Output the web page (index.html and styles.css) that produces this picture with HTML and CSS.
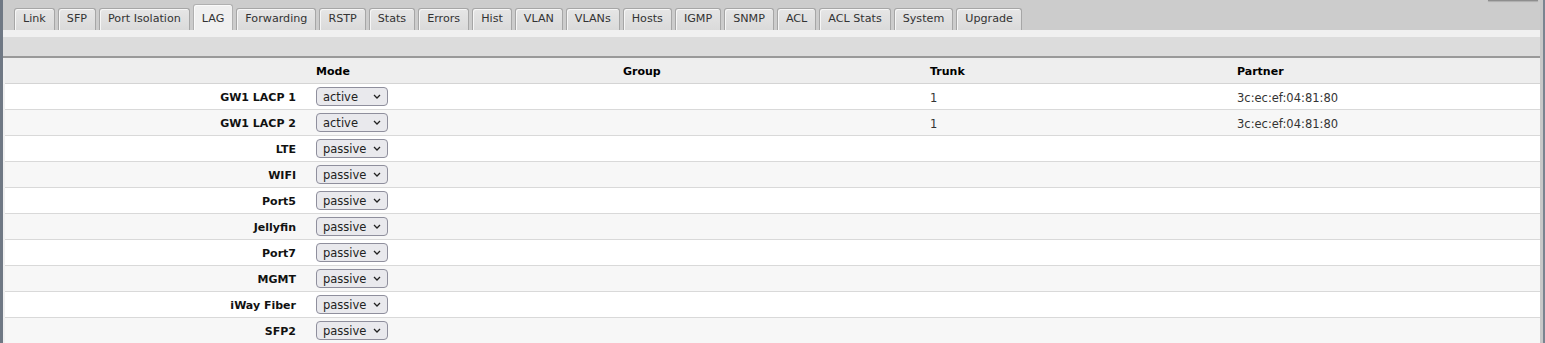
FILE: index.html
```html
<!DOCTYPE html>
<html>
<head>
<meta charset="utf-8">
<title>LAG</title>
<link rel="stylesheet" href="styles.css">
</head>
<body>
<div class="page">
  <div class="leftbar"></div>
  <div class="main">
    <div class="topbtn"></div>
    <ul class="tabs">
      <li class="tab">Link</li>
      <li class="tab">SFP</li>
      <li class="tab">Port Isolation</li>
      <li class="tab active">LAG</li>
      <li class="tab">Forwarding</li>
      <li class="tab">RSTP</li>
      <li class="tab">Stats</li>
      <li class="tab">Errors</li>
      <li class="tab">Hist</li>
      <li class="tab">VLAN</li>
      <li class="tab">VLANs</li>
      <li class="tab">Hosts</li>
      <li class="tab">IGMP</li>
      <li class="tab">SNMP</li>
      <li class="tab">ACL</li>
      <li class="tab">ACL Stats</li>
      <li class="tab">System</li>
      <li class="tab">Upgrade</li>
    </ul>
    <div class="panel">
      <div class="toolbar"></div>
      <div class="tablewrap">
        <table class="grid">
          <thead>
            <tr><th></th><th>Mode</th><th>Group</th><th>Trunk</th><th>Partner</th></tr>
          </thead>
          <tbody>
            <tr><td class="name">GW1 LACP 1</td><td class="ctl"><span class="sel"><select><option>active</option><option>passive</option></select><svg class="chev" width="8" height="5" viewBox="0 0 8 5"><path d="M1 1 L4 4 L7 1" fill="none" stroke="#222" stroke-width="1.3"/></svg></span></td><td></td><td>1</td><td>3c:ec:ef:04:81:80</td></tr>
            <tr><td class="name">GW1 LACP 2</td><td class="ctl"><span class="sel"><select><option>active</option><option>passive</option></select><svg class="chev" width="8" height="5" viewBox="0 0 8 5"><path d="M1 1 L4 4 L7 1" fill="none" stroke="#222" stroke-width="1.3"/></svg></span></td><td></td><td>1</td><td>3c:ec:ef:04:81:80</td></tr>
            <tr><td class="name">LTE</td><td class="ctl"><span class="sel"><select><option>passive</option><option>active</option></select><svg class="chev" width="8" height="5" viewBox="0 0 8 5"><path d="M1 1 L4 4 L7 1" fill="none" stroke="#222" stroke-width="1.3"/></svg></span></td><td></td><td></td><td></td></tr>
            <tr><td class="name">WIFI</td><td class="ctl"><span class="sel"><select><option>passive</option><option>active</option></select><svg class="chev" width="8" height="5" viewBox="0 0 8 5"><path d="M1 1 L4 4 L7 1" fill="none" stroke="#222" stroke-width="1.3"/></svg></span></td><td></td><td></td><td></td></tr>
            <tr><td class="name">Port5</td><td class="ctl"><span class="sel"><select><option>passive</option><option>active</option></select><svg class="chev" width="8" height="5" viewBox="0 0 8 5"><path d="M1 1 L4 4 L7 1" fill="none" stroke="#222" stroke-width="1.3"/></svg></span></td><td></td><td></td><td></td></tr>
            <tr><td class="name">Jellyfin</td><td class="ctl"><span class="sel"><select><option>passive</option><option>active</option></select><svg class="chev" width="8" height="5" viewBox="0 0 8 5"><path d="M1 1 L4 4 L7 1" fill="none" stroke="#222" stroke-width="1.3"/></svg></span></td><td></td><td></td><td></td></tr>
            <tr><td class="name">Port7</td><td class="ctl"><span class="sel"><select><option>passive</option><option>active</option></select><svg class="chev" width="8" height="5" viewBox="0 0 8 5"><path d="M1 1 L4 4 L7 1" fill="none" stroke="#222" stroke-width="1.3"/></svg></span></td><td></td><td></td><td></td></tr>
            <tr><td class="name">MGMT</td><td class="ctl"><span class="sel"><select><option>passive</option><option>active</option></select><svg class="chev" width="8" height="5" viewBox="0 0 8 5"><path d="M1 1 L4 4 L7 1" fill="none" stroke="#222" stroke-width="1.3"/></svg></span></td><td></td><td></td><td></td></tr>
            <tr><td class="name">iWay Fiber</td><td class="ctl"><span class="sel"><select><option>passive</option><option>active</option></select><svg class="chev" width="8" height="5" viewBox="0 0 8 5"><path d="M1 1 L4 4 L7 1" fill="none" stroke="#222" stroke-width="1.3"/></svg></span></td><td></td><td></td><td></td></tr>
            <tr><td class="name">SFP2</td><td class="ctl"><span class="sel"><select><option>passive</option><option>active</option></select><svg class="chev" width="8" height="5" viewBox="0 0 8 5"><path d="M1 1 L4 4 L7 1" fill="none" stroke="#222" stroke-width="1.3"/></svg></span></td><td></td><td></td><td></td></tr>
          </tbody>
        </table>
      </div>
    </div>
  </div>
  <div class="rightbar"></div>
</div>
</body>
</html>
```
FILE: styles.css
```css
html, body {
  margin: 0;
  padding: 0;
  height: 100%;
  overflow: hidden;
}
body {
  background: #cccccc;
  font-family: "DejaVu Sans", Verdana, sans-serif;
  font-size: 11px;
  color: #333;
}
.page {
  display: flex;
  min-height: 100%;
}
.leftbar {
  width: 3px;
  flex: none;
  background: #6f7884;
}
.rightbar {
  width: 5px;
  flex: none;
  background: linear-gradient(to right, #c8c8c8 0, #c8c8c8 3px, #7a8490 3px);
}
.main {
  flex: 1;
  min-width: 0;
  background: #cccccc;
  position: relative;
}
.topbtn {
  position: absolute;
  top: -2px;
  right: 2px;
  width: 50px;
  height: 2px;
  border-bottom: 1px solid #8e8e8e;
  box-shadow: 0 1px 1px rgba(0,0,0,0.15);
  background: #d6d6d6;
}
.tabs {
  list-style: none;
  margin: 0;
  padding: 7px 0 0 11px;
  display: flex;
  align-items: flex-end;
  gap: 3px;
  height: 23px;
}
.tab {
  height: 21px;
  line-height: 20px;
  padding: 0 8px;
  font-size: 11.15px;
  border: 1px solid #a6a6a6;
  border-bottom: none;
  border-radius: 3px 3px 0 0;
  background: linear-gradient(#e6e6e6, #dadada);
  box-shadow: inset 1px 1px 0 #f6f6f6;
  color: #333;
  white-space: nowrap;
}
.tab.active {
  height: 25px;
  line-height: 27px;
  background: #f0f0f0;
  border-color: #b0b0b0;
  box-shadow: inset 1px 1px 0 #fafafa;
}
.panel {
  background: #f0f0f0;
  padding-top: 7px;
}
.toolbar {
  height: 19px;
  background: #dcdcdc;
  border-bottom: 2px solid #999;
}
.tablewrap {
  padding-left: 2px;
  background: #f0f0f0;
  height: 400px;
}
.grid {
  width: 100%;
  border-collapse: collapse;
  table-layout: fixed;
}
.grid th {
  height: 23px;
  background: #eeeeee;
  border-bottom: 1px solid #d4d4d4;
  text-align: left;
  padding: 2px 4px 0;
  font-weight: bold;
  color: #000;
}
.grid td {
  height: 23px;
  padding: 2px 4px 0;
  border-bottom: 1px solid #d9d9d9;
  background: #fff;
  color: #333;
  font-size: 11.5px;
  vertical-align: middle;
}
.grid td.ctl {
  height: 25px;
  padding: 0 4px;
}
.grid tbody tr:nth-child(even) td {
  background: #f7f7f7;
}
.grid td.name {
  text-align: right;
  font-weight: bold;
  font-size: 11px;
  color: #111;
  padding-right: 16px;
}
.sel {
  position: relative;
  display: inline-block;
  vertical-align: middle;
}
.sel select {
  appearance: none;
  -webkit-appearance: none;
  width: 72px;
  height: 19px;
  margin: 0;
  padding: 0 0 0 6px;
  border: 1px solid #8f8f9d;
  border-radius: 4px;
  background: #e9e9ed;
  font-family: "DejaVu Sans", Verdana, sans-serif;
  font-size: 11.5px;
  color: #222;
  display: block;
}
.chev {
  position: absolute;
  right: 7px;
  top: 7px;
  pointer-events: none;
}
```
